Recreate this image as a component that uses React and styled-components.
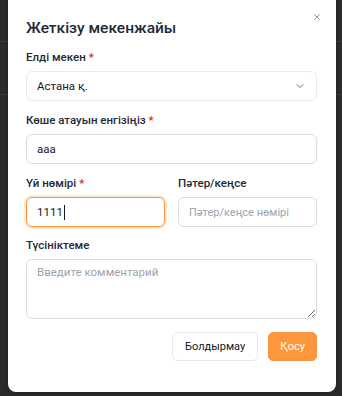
import styled, { createGlobalStyle } from "styled-components"
import { ChevronDown, X } from "lucide-react"

const Global = createGlobalStyle`
  * { box-sizing: border-box; }
  html, body { margin: 0; padding: 0; }
  body {
    width: 342px;
    height: 396px;
    overflow: hidden;
    font-family: Roboto, "Noto Sans", sans-serif;
    background: #2b2b2b;
  }
`

export default function App() {
  return (<Page>
    <Global />
    <BackPage>
      <BackRow $h={42} />
      <BackRow $h={53} />
    </BackPage>
    <Overlay>
      <Modal>
        <Close><X size={10} strokeWidth={1.8} /></Close>
        <Title>Жеткізу мекенжайы</Title>
        <Form>
          <Field>
            <Label>Елді мекен <Star>*</Star></Label>
            <Select>
              <span>Астана қ.</span>
              <ChevronDown size={12} color="#6b7280" />
            </Select>
          </Field>
          <Field>
            <Label>Көше атауын енгізіңіз <Star>*</Star></Label>
            <Input defaultValue="aaa" />
          </Field>
          <Row>
            <Field>
              <Label>Үй нөмірі <Star>*</Star></Label>
              <FocusBox>1111<Caret /></FocusBox>
            </Field>
            <Field>
              <Label>Пәтер/кеңсе</Label>
              <Input placeholder="Пәтер/кеңсе нөмірі" />
            </Field>
          </Row>
          <Field>
            <Label>Түсініктеме</Label>
            <TextArea placeholder="Введите комментарий" />
          </Field>
        </Form>
        <Actions>
          <Button>Болдырмау</Button>
          <Button $primary>Қосу</Button>
        </Actions>
      </Modal>
    </Overlay>
  </Page>);
}

const Page = styled.div`
position: relative;
width: 342px;
height: 396px;
overflow: hidden;
`

const BackPage = styled.div`
display: flex;
flex-direction: column;
background: #2b2b2b;
height: 100%;
`

const BackRow = styled.div`
height: ${p => p.$h}px;
border-bottom: 1px solid #3a3a3a;
`

const Overlay = styled.div`
position: absolute;
inset: 0;
`

const Modal = styled.div`
position: relative;
display: flex;
flex-direction: column;
width: 328px;
margin: -10px 0 0 8px;
padding: 26px 19px 31px 18px;
background: #ffffff;
border-radius: 8px;
box-shadow: 0 1px 3px rgba(0,0,0,0.3);
`

const Close = styled.div`
position: absolute;
top: 22px;
right: 14px;
display: flex;
color: #6b7280;
`

const Title = styled.div`
font-size: 15.5px;
line-height: 24px;
font-weight: 500;
color: #1f2937;
`

const Form = styled.div`
display: flex;
flex-direction: column;
gap: 10px;
margin-top: 8px;
`

const Field = styled.div`
display: flex;
flex-direction: column;
gap: 5px;
flex: 1;
min-width: 0;
`

const Row = styled.div`
display: flex;
gap: 13px;
margin-bottom: -1px;
`

const Label = styled.div`
font-size: 11.5px;
line-height: 18px;
font-weight: 500;
color: #1f2937;
`

const Star = styled.span`
color: #dc2626;
`

const Select = styled.div`
display: flex;
align-items: center;
justify-content: space-between;
height: 30px;
padding: 0 10px 0 10px;
border: 1px solid #e8ebf0;
border-radius: 6px;
font-size: 11.5px;
color: #111827;
`

const Input = styled.input`
display: block;
height: 30px;
width: 100%;
padding: 0 10px;
border: 1px solid #d9dce1;
border-radius: 6px;
font-family: inherit;
font-size: 11.5px;
color: #111827;
outline: none;
&::placeholder { color: #9ca3af; font-size: 11px; }
`

const FocusBox = styled.div`
display: flex;
align-items: center;
height: 30px;
padding: 0 10px;
border: 1px solid #fb923c;
border-radius: 6px;
box-shadow: 0 0 0 2px #fdebd8;
font-size: 11.5px;
color: #111827;
`

const Caret = styled.span`
width: 1px;
height: 15px;
background: #111827;
margin-left: 1px;
`

const TextArea = styled.textarea`
display: block;
height: 60px;
width: 100%;
padding: 5px 10px;
border: 1px solid #d9dce1;
border-radius: 6px;
font-family: inherit;
font-size: 11.5px;
color: #111827;
resize: vertical;
outline: none;
&::placeholder { color: #9ca3af; }
`

const Actions = styled.div`
display: flex;
justify-content: flex-end;
gap: 10px;
margin-top: 13px;
`

const Button = styled.div`
display: flex;
align-items: center;
justify-content: center;
height: 29px;
padding: 0 ${p => p.$primary ? 11 : 12}px;
border-radius: 5px;
font-size: 11px;
border: 1px solid ${p => p.$primary ? "#fd963c" : "#e5e9f0"};
background: ${p => p.$primary ? "#fd963c" : "#ffffff"};
color: ${p => p.$primary ? "#ffffff" : "#111827"};
`
